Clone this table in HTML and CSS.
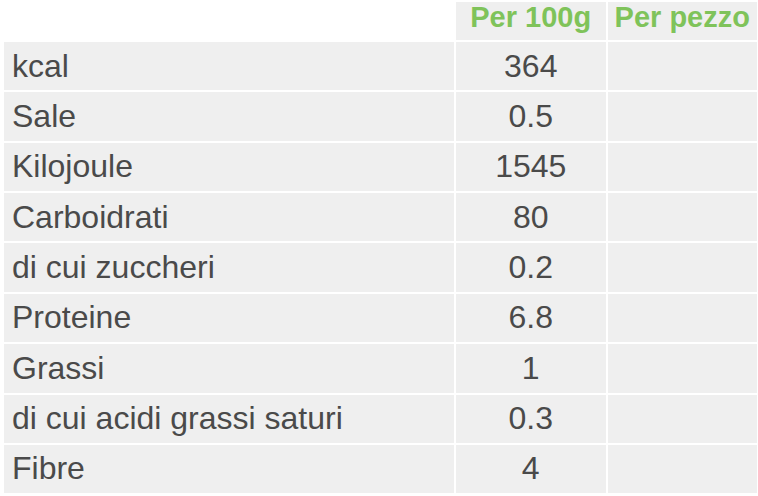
FILE: index.html
```html
<!DOCTYPE html>
<html lang="it">
<head>
<meta charset="utf-8">
<title>Valori nutrizionali</title>
<link rel="stylesheet" href="styles.css">
</head>
<body>
<table class="nutri">
  <colgroup>
    <col class="col-name">
    <col class="col-val">
    <col class="col-val">
  </colgroup>
  <thead>
    <tr>
      <th class="blank"></th>
      <th class="head">Per 100g</th>
      <th class="head">Per pezzo</th>
    </tr>
  </thead>
  <tbody>
    <tr><td class="name">kcal</td><td class="val">364</td><td class="val"></td></tr>
    <tr><td class="name">Sale</td><td class="val">0.5</td><td class="val"></td></tr>
    <tr><td class="name">Kilojoule</td><td class="val">1545</td><td class="val"></td></tr>
    <tr><td class="name">Carboidrati</td><td class="val">80</td><td class="val"></td></tr>
    <tr><td class="name">di cui zuccheri</td><td class="val">0.2</td><td class="val"></td></tr>
    <tr><td class="name">Proteine</td><td class="val">6.8</td><td class="val"></td></tr>
    <tr><td class="name">Grassi</td><td class="val">1</td><td class="val"></td></tr>
    <tr><td class="name">di cui acidi grassi saturi</td><td class="val">0.3</td><td class="val"></td></tr>
    <tr><td class="name">Fibre</td><td class="val">4</td><td class="val"></td></tr>
  </tbody>
</table>
</body>
</html>
```
FILE: styles.css
```css
html, body {
  margin: 0;
  padding: 0;
  background: #ffffff;
}

.nutri {
  margin-left: 2px;
  border-collapse: separate;
  border-spacing: 2px;
  table-layout: fixed;
  width: 757px;
  font-family: "Liberation Sans", Arial, Helvetica, sans-serif;
  color: #4a4a4a;
}

.col-name { width: 450px; }
.col-val { width: 149.5px; }

.nutri .blank {
  padding: 0;
  background: transparent;
  height: 38px;
}

.nutri .head {
  padding: 0;
  background: #efefef;
  color: #7fc35a;
  font-size: 29px;
  font-weight: bold;
  line-height: 30px;
  height: 38px;
  vertical-align: top;
  text-align: center;
  white-space: nowrap;
}

.nutri .name,
.nutri .val {
  background: #efefef;
  font-size: 32px;
  line-height: 45.8px;
  padding: 1.5px 0 1.075px 0;
  height: 45.8px;
  vertical-align: top;
  white-space: nowrap;
}

.nutri .name {
  text-align: left;
  padding-left: 8px;
}

.nutri .val {
  text-align: center;
}
```
